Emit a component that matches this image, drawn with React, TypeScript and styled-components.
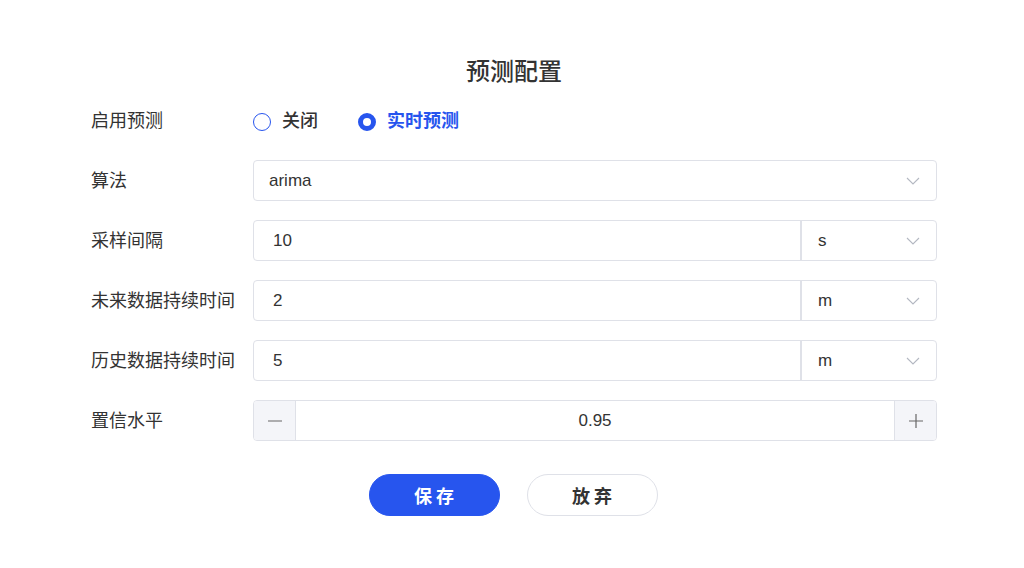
import React, { useState } from 'react';
import styled, { createGlobalStyle } from 'styled-components';

const GlobalStyle = createGlobalStyle`
	body {
		margin: 0;
		background: #ffffff;
		font-family: 'Liberation Sans', 'Noto Sans CJK SC', sans-serif;
		color: #333333;
	}
`;

const BLUE = '#2755ee';
const BORDER = '#dfe1e8';
const CJK = `'Noto Sans CJK SC', 'Liberation Sans', sans-serif`;

const Chevron = () => (
	<svg width="14" height="8" viewBox="0 0 14 8" fill="none">
		<path d="M1 1l6 6 6-6" stroke="#b4b8c2" strokeWidth="1.1" />
	</svg>
);

const App: React.FC = () => {
	const [enabled, setEnabled] = useState(true);
	const [confidence, setConfidence] = useState(0.95);

	return (
		<>
			<GlobalStyle />
			<Page>
				<Title>预测配置</Title>
				<Form>
					<Row>
						<Label>启用预测</Label>
						<RadioGroup>
							<RadioOption active={!enabled} onClick={() => setEnabled(false)}>
								<RadioDot active={!enabled} />
								<RadioText>关闭</RadioText>
							</RadioOption>
							<RadioOption active={enabled} onClick={() => setEnabled(true)}>
								<RadioDot active={enabled} />
								<RadioText>实时预测</RadioText>
							</RadioOption>
						</RadioGroup>
					</Row>
					<Row>
						<Label>算法</Label>
						<Select>
							<span>arima</span>
							<Chevron />
						</Select>
					</Row>
					<Row>
						<Label>采样间隔</Label>
						<Combo>
							<TextInput>10</TextInput>
							<UnitSelect>
								<span>s</span>
								<Chevron />
							</UnitSelect>
						</Combo>
					</Row>
					<Row>
						<Label>未来数据持续时间</Label>
						<Combo>
							<TextInput>2</TextInput>
							<UnitSelect>
								<span>m</span>
								<Chevron />
							</UnitSelect>
						</Combo>
					</Row>
					<Row>
						<Label>历史数据持续时间</Label>
						<Combo>
							<TextInput>5</TextInput>
							<UnitSelect>
								<span>m</span>
								<Chevron />
							</UnitSelect>
						</Combo>
					</Row>
					<Row>
						<Label>置信水平</Label>
						<Stepper>
							<StepButton onClick={() => setConfidence((c) => +(c - 0.01).toFixed(2))}>
								<svg width="14" height="14" viewBox="0 0 14 14">
									<path d="M0 7h14" stroke="#666" strokeWidth="1.2" />
								</svg>
							</StepButton>
							<StepValue>{confidence.toFixed(2)}</StepValue>
							<StepButton onClick={() => setConfidence((c) => +(c + 0.01).toFixed(2))}>
								<svg width="14" height="14" viewBox="0 0 14 14">
									<path d="M0 7h14M7 0v14" stroke="#666" strokeWidth="1.2" />
								</svg>
							</StepButton>
						</Stepper>
					</Row>
				</Form>
				<Actions>
					<Button primary>保 存</Button>
					<Button>放 弃</Button>
				</Actions>
			</Page>
		</>
	);
};

const Page = styled.div`
	width: 1024px;
	height: 568px;
	box-sizing: border-box;
	padding: 54px 87px 0 91px;
	display: flex;
	flex-direction: column;
`;

const Title = styled.h1`
	margin: 0;
	height: 32px;
	line-height: 32px;
	text-align: center;
	font-family: ${CJK};
	font-size: 24px;
	font-weight: 500;
	color: #333;
`;

const Form = styled.div`
	margin-top: 14px;
	display: flex;
	flex-direction: column;
	gap: 19px;
`;

const Row = styled.div`
	display: flex;
	align-items: center;
	height: 41px;
`;

const Label = styled.div`
	width: 162px;
	flex-shrink: 0;
	padding-bottom: 4px;
	font-family: ${CJK};
	font-size: 18px;
	line-height: 24px;
	color: #333;
`;

const RadioGroup = styled.div`
	display: flex;
	align-items: center;
	gap: 40px;
	padding-top: 2px;
`;

const RadioOption = styled.label<{ active: boolean }>`
	display: flex;
	align-items: center;
	gap: 11px;
	font-family: ${CJK};
	font-size: 18px;
	line-height: 24px;
	font-weight: ${(p) => (p.active ? 600 : 500)};
	color: ${(p) => (p.active ? BLUE : '#333')};
	cursor: pointer;
`;

const RadioText = styled.span`
	padding-bottom: 6px;
`;

const RadioDot = styled.span<{ active: boolean }>`
	width: 18px;
	height: 18px;
	box-sizing: border-box;
	border-radius: 50%;
	border: ${(p) => (p.active ? `5.5px solid ${BLUE}` : `1.5px solid ${BLUE}`)};
	background: #fff;
`;

const Select = styled.div`
	flex: 1;
	height: 41px;
	box-sizing: border-box;
	border: 1px solid ${BORDER};
	border-radius: 4px;
	display: flex;
	align-items: center;
	justify-content: space-between;
	padding: 0 16px 0 15px;
	font-size: 17px;
	color: #333;
`;

const Combo = styled.div`
	flex: 1;
	height: 41px;
	display: flex;
	box-sizing: border-box;
	border: 1px solid ${BORDER};
	border-radius: 4px;
	overflow: hidden;
`;

const TextInput = styled.div`
	flex: 1;
	display: flex;
	align-items: center;
	padding: 0 19px;
	font-size: 17px;
	color: #333;
`;

const UnitSelect = styled.div`
	width: 136px;
	box-sizing: border-box;
	border-left: 2px solid ${BORDER};
	display: flex;
	align-items: center;
	justify-content: space-between;
	padding: 0 16px;
	font-size: 17px;
	color: #333;
`;

const Stepper = styled.div`
	flex: 1;
	height: 41px;
	display: flex;
	box-sizing: border-box;
	border: 1px solid ${BORDER};
	border-radius: 4px;
	overflow: hidden;
`;

const StepButton = styled.button`
	width: 42px;
	border: none;
	background: #f4f5f9;
	display: flex;
	align-items: center;
	justify-content: center;
	padding: 0;
	cursor: pointer;

	&:first-child {
		border-right: 1px solid ${BORDER};
	}
	&:last-child {
		border-left: 1px solid ${BORDER};
	}
`;

const StepValue = styled.div`
	flex: 1;
	display: flex;
	align-items: center;
	justify-content: center;
	font-size: 17px;
	color: #333;
`;

const Actions = styled.div`
	margin-top: 33px;
	display: flex;
	justify-content: center;
	gap: 27px;
	padding-right: 2px;
`;

const Button = styled.button<{ primary?: boolean }>`
	width: 131px;
	height: 42px;
	border-radius: 21px;
	font-family: ${CJK};
	font-size: 18px;
	font-weight: 600;
	cursor: pointer;
	border: 1px solid ${(p) => (p.primary ? BLUE : BORDER)};
	background: ${(p) => (p.primary ? BLUE : '#fff')};
	color: ${(p) => (p.primary ? '#fff' : '#333')};
`;

export default App;
